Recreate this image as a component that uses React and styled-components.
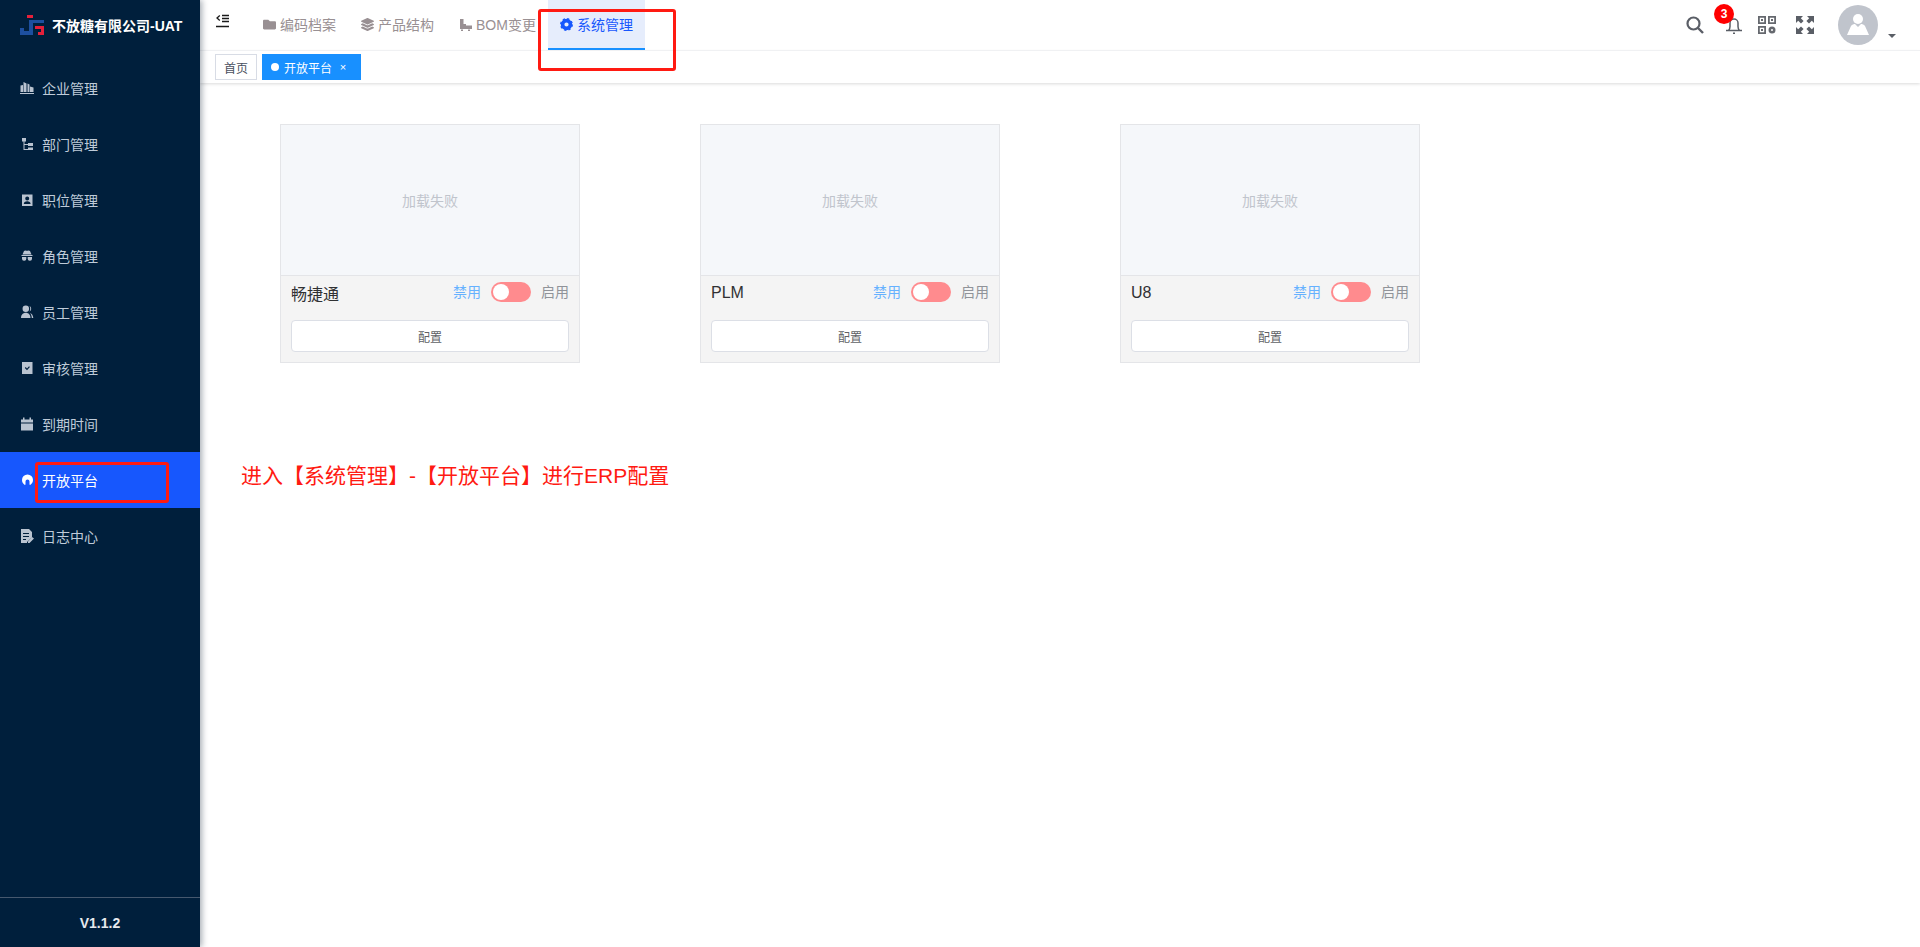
import React from 'react'
import styled, { createGlobalStyle } from 'styled-components'
import { FaFolder, FaLayerGroup } from 'react-icons/fa'

const GlobalStyle = createGlobalStyle`
  html, body {
    margin: 0;
    padding: 0;
    height: 100%;
    background: #fff;
    font-family: "Liberation Sans", "Noto Sans CJK SC", sans-serif;
  }
  #root {
    height: 100%;
  }
  * {
    box-sizing: border-box;
  }
`

const Layout = styled.div`
  display: flex;
  height: 947px;
  overflow: hidden;
`

const Sidebar = styled.aside`
  width: 200px;
  flex: none;
  display: flex;
  flex-direction: column;
  background: #001f3c;
  box-shadow: 2px 0 6px rgba(0, 21, 41, 0.35);
  position: relative;
  z-index: 3;
`

const Brand = styled.div`
  height: 60px;
  padding: 5px 0 15px 20px;
  display: flex;
  align-items: center;
  gap: 8px;
  color: #fff;
  font-size: 14px;
  font-weight: 700;
  white-space: nowrap;
`

const Menu = styled.nav`
  flex: 1;
`

const MenuItem = styled.div`
  position: relative;
  height: 56px;
  padding-left: 20px;
  display: flex;
  align-items: center;
  gap: 8px;
  font-size: 14px;
  color: ${props => (props.active ? '#fff' : '#bfcbd9')};
  background: ${props => (props.active ? '#1757fd' : 'transparent')};
`

const Version = styled.div`
  height: 50px;
  border-top: 1px solid #46586e;
  display: flex;
  align-items: center;
  justify-content: center;
  color: #e6e9ee;
  font-size: 14px;
  font-weight: 700;
`

const Annotation = styled.div`
  position: absolute;
  left: ${props => props.left}px;
  top: ${props => props.top}px;
  width: ${props => props.w}px;
  height: ${props => props.h}px;
  border: 3px solid #ff1a12;
  border-radius: 3px;
  z-index: 5;
  pointer-events: none;
`

const Main = styled.main`
  flex: 1;
  min-width: 0;
  display: flex;
  flex-direction: column;
`

const Navbar = styled.header`
  height: 51px;
  flex: none;
  display: flex;
  align-items: flex-start;
  border-bottom: 1px solid #f0f1f3;
  position: relative;
  z-index: 2;
`

const Hamburger = styled.div`
  width: 51px;
  height: 50px;
  padding: 14px 0 0 16px;
  display: flex;
  align-items: flex-start;
`

const Tab = styled.div`
  position: relative;
  height: 50px;
  width: ${props => props.w || 98}px;
  padding-left: 12px;
  display: flex;
  align-items: center;
  gap: 4px;
  font-size: 14px;
  white-space: nowrap;
  color: ${props => (props.active ? '#1757fd' : '#999093')};
  background: ${props => (props.active ? '#e6edfc' : 'transparent')};
  border-bottom: 2px solid ${props => (props.active ? '#1890ff' : 'transparent')};
`

const TabGlyph = styled.span`
  display: flex;
  font-size: 13px;
`

const Tools = styled.div`
  margin-left: auto;
  height: 50px;
  display: flex;
  align-items: flex-start;
  color: #5a5e66;
`

const ToolIcon = styled.div`
  position: relative;
  width: 18px;
  height: 18px;
  margin-top: 16px;
  margin-right: ${props => props.gap}px;
`

const Badge = styled.span`
  position: absolute;
  left: -11px;
  top: -12px;
  width: 20px;
  height: 20px;
  border-radius: 50%;
  background: #f00;
  color: #fff;
  font-size: 12px;
  font-weight: 700;
  display: flex;
  align-items: center;
  justify-content: center;
`

const Avatar = styled.div`
  width: 40px;
  height: 40px;
  margin-top: 5px;
  border-radius: 50%;
  background: #c0c4cc;
  overflow: hidden;
`

const Caret = styled.div`
  width: 0;
  height: 0;
  margin: 34px 24px 0 10px;
  border-left: 4px solid transparent;
  border-right: 4px solid transparent;
  border-top: 4px solid #5a5e66;
`

const TagBar = styled.div`
  height: 32px;
  flex: none;
  padding: 3px 0 0 15px;
  display: flex;
  align-items: flex-start;
  gap: 5px;
  background: #fff;
  box-shadow: 0 1px 3px rgba(0, 0, 0, 0.15);
  position: relative;
  z-index: 1;
`

const Tag = styled.div`
  height: 26px;
  display: flex;
  align-items: center;
  font-size: 12px;
  white-space: nowrap;
  padding: 0 8px;
  color: ${props => (props.active ? '#fff' : '#495060')};
  background: ${props => (props.active ? '#1890ff' : '#fff')};
  border: 1px solid ${props => (props.active ? '#1890ff' : '#d8dce5')};
`

const TagDot = styled.i`
  width: 8px;
  height: 8px;
  margin-right: 5px;
  border-radius: 50%;
  background: #fff;
`

const TagClose = styled.span`
  margin: 0 3px 0 5px;
  width: 12px;
  text-align: center;
  font-size: 11px;
`

const Content = styled.section`
  flex: 1;
  padding: 41px 0 0 41px;
`

const CardRow = styled.div`
  display: flex;
  gap: 120px;
  padding-left: 39px;
`

const Card = styled.div`
  width: 300px;
  height: 239px;
  display: flex;
  flex-direction: column;
  border: 1px solid #e4e5e8;
  background: #f4f4f4;
`

const CardImage = styled.div`
  height: 151px;
  flex: none;
  display: flex;
  align-items: center;
  justify-content: center;
  background: #f5f7fa;
  border-bottom: 1px solid #e4e5e8;
  color: #c0c4cc;
  font-size: 14px;
`

const CardBody = styled.div`
  flex: 1;
  padding: 6px 10px 0;
`

const CardHead = styled.div`
  height: 38px;
  display: flex;
  align-items: flex-start;
  justify-content: space-between;
`

const CardName = styled.div`
  font-size: 16px;
  color: #303133;
  line-height: 26px;
  margin-top: ${props => (props.latin ? -2 : 0)}px;
`

const SwitchWrap = styled.div`
  display: flex;
  align-items: center;
  gap: 10px;
  height: 20px;
  font-size: 14px;
`

const SwitchLabel = styled.span`
  margin-top: -2px;
  color: ${props => (props.on ? '#66b1ff' : '#909399')};
`

const SwitchTrack = styled.span`
  position: relative;
  width: 40px;
  height: 20px;
  border-radius: 10px;
  background: #ff8b8e;
`

const SwitchThumb = styled.span`
  position: absolute;
  left: 2px;
  top: 2px;
  width: 16px;
  height: 16px;
  border-radius: 50%;
  background: #fff;
`

const ConfigButton = styled.div`
  height: 32px;
  display: flex;
  align-items: center;
  justify-content: center;
  background: #fff;
  border: 1px solid #dcdfe6;
  border-radius: 4px;
  font-size: 12px;
  color: #606266;
`

const Note = styled.div`
  margin-top: 100px;
  color: #ff1a12;
  font-size: 21px;
  line-height: 26px;
`

const Logo = () => (
  <svg width="24" height="20" viewBox="0 0 24 20">
    <rect x="7" y="0" width="6" height="3" fill="#e5203a" />
    <path d="M0 13h4v3h5V5h6v3h-2v12H0z" fill="#1d4f9f" />
    <rect x="15" y="5" width="9" height="3" fill="#1d4f9f" />
    <path d="M15 11h9v9h-6v-3h3v-3h-6z" fill="#e5203a" />
  </svg>
)

const SideIcon = ({ children }) => (
  <svg width="14" height="14" viewBox="0 0 14 14" fill="#b9c3d0" style={{ flex: 'none' }}>
    {children}
  </svg>
)

const NAV_ITEMS = [
  {
    label: '企业管理',
    icon: <path d="M0.500 11V4.500L3 4v7zM3.500 11V1l3 1.500V11zM7.500 11V2.500l2 1V11zM10 11V5.500l3.500 1V11zM0 12h14v1H0z" />
  },
  {
    label: '部门管理',
    icon: <path d="M2 1h4v3.500H2zM3.500 4.500h1V12H8v1H3.500zM4.500 7H8v1H4.500zM8 6h5v3H8zM8 10.500h5v2.500H8z" />
  },
  {
    label: '职位管理',
    icon: (
      <path
        fillRule="evenodd"
        d="M2 1.500h10.500V13H2zM7.200 3.500a2 2 0 100 4 2 2 0 000-4zM3.800 11h6.800c0-1.800-1.400-2.800-3.400-2.800s-3.400 1-3.400 2.800z"
      />
    )
  },
  {
    label: '角色管理',
    icon: (
      <path
        fillRule="evenodd"
        d="M4 2c1-1 2-.5 3-.2 1-.3 2-.8 3 .2l1.500 3.500h-9zM1.500 6h11v1h-11zM2 8h4.300v1.800a2 2 0 01-2 2h-.3a2 2 0 01-2-2zM7.700 8H12v1.800a2 2 0 01-2 2h-.3a2 2 0 01-2-2z"
      />
    )
  },
  {
    label: '员工管理',
    icon: (
      <path d="M5.800 0.500a3 3 0 110 6.500 3 3 0 010-6.500zM1 13c0-3.200 2-5.300 4.800-5.300S10.500 9.800 10.500 13zM9.500 1c2 .8 2.500 4.500 0 5.500 1-1.500 1-4 0-5.500zM10 8c2 .5 3 2.500 3.300 5H11.800c0-2-.8-4-1.800-5z" />
    )
  },
  {
    label: '审核管理',
    icon: (
      <path
        fillRule="evenodd"
        d="M2 1h10.500v12H2zM4.800 7l.9-.9 1.300 1.300L9 5.200l.9.9L7 9.200z"
      />
    )
  },
  {
    label: '到期时间',
    icon: <path d="M1 2.500h2V.500h1.500v2h5v-2H11v2h2v3H1zM1 6.500h12v7H1z" />
  },
  {
    label: '开放平台',
    active: true,
    icon: (
      <path
        fill="#fff"
        d="M7.500 1.500A5.500 5.500 0 0113 7c0 2-1 3.700-2.500 4.800-.5.200-1 0-1-.6V8.500a2 2 0 00-4 0v2.700c0 .6-.5.8-1 .6C3 10.700 2 9 2 7a5.500 5.500 0 015.500-5.500z"
      />
    )
  },
  {
    label: '日志中心',
    icon: (
      <path
        fillRule="evenodd"
        d="M1 0h8l3 3v5l-5 5v1H1zM3 4v1h6V4zM3 7v1h6V7zM3 10v1h3v-1zM12 8l2 1.500-4.500 4.500H8v-1.500z"
      />
    )
  }
]

const BomIcon = () => (
  <svg width="13" height="13" viewBox="0 0 13 13" fill="currentColor">
    <path d="M1 1h3.500v5H7v1.500h6V11H1zM2 11.500h2V13H2zM9 11.500h2V13H9z" />
  </svg>
)

const GearIcon = () => (
  <svg width="13" height="13" viewBox="0 0 13 13" fill="none" stroke="currentColor">
    <circle cx="6.500" cy="6.500" r="3.900" strokeWidth="3.600" />
    <circle cx="6.500" cy="6.500" r="5.800" strokeWidth="1.300" strokeDasharray="2.300 2.250" />
  </svg>
)

const HamburgerIcon = () => (
  <svg width="13" height="14" viewBox="0 0 13 14" fill="none" stroke="#1a1a1a" strokeWidth="1.300">
    <path d="M3.800 1.500L1 4l2.800 2.500M6 1.500h7M6 4.500h7M6 7.500h7M0 12.500h13" />
  </svg>
)

const SearchIcon = () => (
  <svg width="18" height="18" viewBox="0 0 18 18" fill="none" stroke="#5a5e66">
    <circle cx="7.500" cy="7.500" r="6" strokeWidth="2.200" />
    <path d="M12 12l5 5" strokeWidth="2.400" />
  </svg>
)

const BellIcon = () => (
  <svg width="18" height="18" viewBox="0 0 18 18" fill="none" stroke="#5a5e66" strokeWidth="1.500">
    <path d="M1 14.500h16M3.500 14.500c1-1 1.500-2 1.500-4V7a4 4 0 018 0v3.500c0 2 .5 3 1.500 4" />
    <path d="M8 17.300h2" />
  </svg>
)

const QrIcon = () => (
  <svg width="18" height="18" viewBox="0 0 18 18" fill="#66696f">
    <path
      fillRule="evenodd"
      d="M0 0h8v8H0zM1.800 1.800v4.400h4.400V1.800zM10 0h8v8h-8zM11.800 1.800v4.400h4.400V1.800zM0 10h8v8H0zM1.800 11.800v4.400h4.400v-4.400z"
    />
    <rect x="3" y="3" width="2" height="2" />
    <rect x="13" y="3" width="2" height="2" />
    <rect x="3" y="13" width="2" height="2" />
    <path
      fillRule="evenodd"
      d="M14 10.500a3.500 3.500 0 110 7 3.500 3.500 0 010-7zM14 13a1 1 0 100 2 1 1 0 000-2z"
    />
  </svg>
)

const FullscreenIcon = () => (
  <svg width="18" height="18" viewBox="0 0 18 18" fill="#5a5e66">
    <path d="M0 0h7L4.800 2.200 7.600 5 5 7.600 2.200 4.800 0 7zM18 0v7l-2.200-2.200L13 7.600 10.400 5l2.800-2.800L11 0zM0 18v-7l2.200 2.200L5 10.400 7.600 13l-2.800 2.800L7 18zM18 18h-7l2.200-2.200L10.400 13 13 10.400l2.800 2.800L18 11z" />
  </svg>
)

const AvatarFigure = () => (
  <svg width="40" height="40" viewBox="0 0 40 40" fill="#fff">
    <circle cx="20" cy="14" r="5" />
    <path d="M9 30l4-9c1-1.500 3-2 4-2l3 3 3-3c1 0 3 .5 4 2l4 9z" />
  </svg>
)

const CARDS = [
  { name: '畅捷通' },
  { name: 'PLM', latin: true },
  { name: 'U8', latin: true }
]

export default function App() {
  return (
    <Layout>
      <GlobalStyle />
      <Sidebar>
        <Brand>
          <Logo />
          不放糖有限公司-UAT
        </Brand>
        <Menu>
          {NAV_ITEMS.map(item => (
            <MenuItem key={item.label} active={item.active}>
              <SideIcon>{item.icon}</SideIcon>
              {item.label}
              {item.active && <Annotation left={35} top={10} w={134} h={41} />}
            </MenuItem>
          ))}
        </Menu>
        <Version>V1.1.2</Version>
      </Sidebar>
      <Main>
        <Navbar>
          <Hamburger><HamburgerIcon /></Hamburger>
          <Tab>
            <TabGlyph><FaFolder /></TabGlyph>
            编码档案
          </Tab>
          <Tab>
            <TabGlyph><FaLayerGroup /></TabGlyph>
            产品结构
          </Tab>
          <Tab w={101}>
            <TabGlyph><BomIcon /></TabGlyph>
            BOM变更
          </Tab>
          <Tab active w={97}>
            <TabGlyph><GearIcon /></TabGlyph>
            系统管理
            <Annotation left={-10} top={9} w={138} h={62} />
          </Tab>
          <Tools>
            <ToolIcon gap={21}><SearchIcon /></ToolIcon>
            <ToolIcon gap={15}>
              <BellIcon />
              <Badge>3</Badge>
            </ToolIcon>
            <ToolIcon gap={20}><QrIcon /></ToolIcon>
            <ToolIcon gap={24}><FullscreenIcon /></ToolIcon>
            <Avatar><AvatarFigure /></Avatar>
            <Caret />
          </Tools>
        </Navbar>
        <TagBar>
          <Tag>首页</Tag>
          <Tag active>
            <TagDot />
            开放平台
            <TagClose>×</TagClose>
          </Tag>
        </TagBar>
        <Content>
          <CardRow>
            {CARDS.map(card => (
              <Card key={card.name}>
                <CardImage>加载失败</CardImage>
                <CardBody>
                  <CardHead>
                    <CardName latin={card.latin}>{card.name}</CardName>
                    <SwitchWrap>
                      <SwitchLabel on>禁用</SwitchLabel>
                      <SwitchTrack><SwitchThumb /></SwitchTrack>
                      <SwitchLabel>启用</SwitchLabel>
                    </SwitchWrap>
                  </CardHead>
                  <ConfigButton>配置</ConfigButton>
                </CardBody>
              </Card>
            ))}
          </CardRow>
          <Note>进入【系统管理】-【开放平台】进行ERP配置</Note>
        </Content>
      </Main>
    </Layout>
  )
}
